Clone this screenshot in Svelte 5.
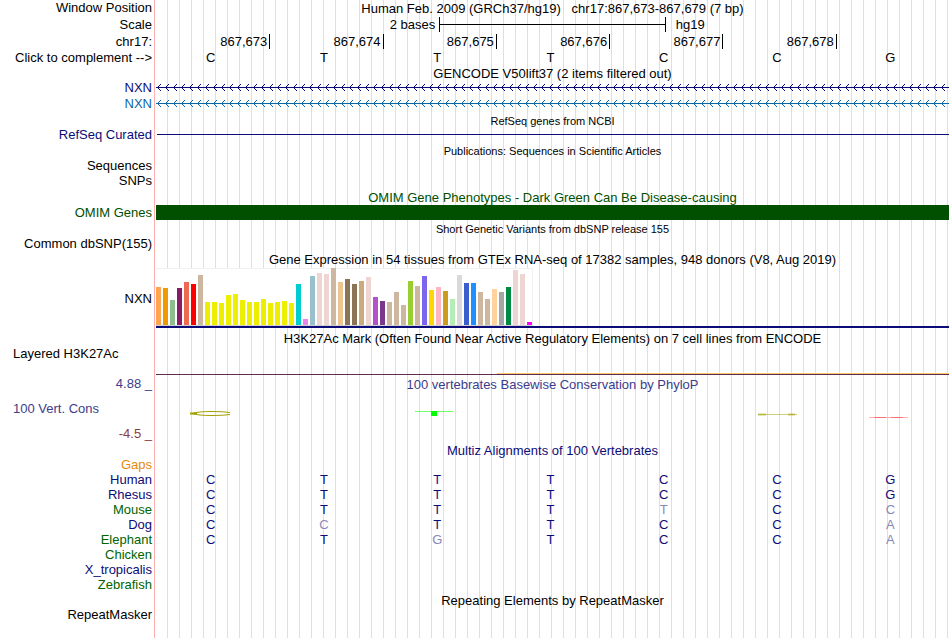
<script lang="ts">
  const positions = ['867,673', '867,674', '867,675', '867,676', '867,677', '867,678'];

  const complements: Record<string, string> = { A: 'T', C: 'G', G: 'C', T: 'A' };
  let complemented = $state(false);
  const reference = 'CTTTCCG'.split('');
  let bases = $derived(complemented ? reference.map((b) => complements[b]) : reference);

  const genes = [
    { id: 'arrows-a', color: '#0c0c78' },
    { id: 'arrows-b', color: '#0c66a8' },
  ];

  const alignments = [
    { species: 'Gaps', tone: 'orange', seq: '' },
    { species: 'Human', tone: 'navy', seq: 'CTTTCCG' },
    { species: 'Rhesus', tone: 'navy', seq: 'CTTTCCG' },
    { species: 'Mouse', tone: 'green', seq: 'CTTTTCC' },
    { species: 'Dog', tone: 'navy', seq: 'CCTTCCA' },
    { species: 'Elephant', tone: 'green', seq: 'CTGTCCA' },
    { species: 'Chicken', tone: 'green', seq: '' },
    { species: 'X_tropicalis', tone: 'navy', seq: '' },
    { species: 'Zebrafish', tone: 'green', seq: '' },
  ];

  // GTEx tissues: [bar height, tissue colour]
  const brain = '#eeee00';
  const tissues: [number, string][] = [
    [38, '#ffa54f'], [37, '#ee9a00'], [25, '#8fbc8f'], [37, '#8b1c62'], [43, '#ee6a50'],
    [41, '#ff0000'], [50, '#cdb79e'],
    [23, brain], [23, brain], [22, brain], [30, brain], [31, brain], [25, brain], [23, brain],
    [23, brain], [26, brain], [22, brain], [23, brain], [24, brain], [22, brain],
    [41, '#00cdcd'], [6, '#ee82ee'], [49, '#9ac0cd'], [52, '#eed5d2'], [51, '#eed5d2'],
    [57, '#cdb79e'], [43, '#eec591'], [46, '#8b7355'], [41, '#8b7355'], [44, '#cdaa7d'],
    [48, '#eed5d2'], [28, '#b452cd'], [24, '#7a378b'], [23, '#cdb79e'], [33, '#cdb79e'],
    [20, '#cdb79e'], [44, '#9acd32'], [39, '#cdb79e'], [49, '#7a67ee'], [35, '#ffd700'],
    [38, '#ffb6c1'], [34, '#cd9b1d'], [26, '#b4eeb4'], [50, '#d9d9d9'], [42, '#3a5fcd'],
    [42, '#1e90ff'], [33, '#cdb79e'], [26, '#cdb79e'], [36, '#ffd39b'], [33, '#a6a6a6'],
    [38, '#008b45'], [55, '#eed5d2'], [51, '#eed5d2'], [3, '#ff00ff'],
  ];
</script>

<main class="browser">
  <div class="row tall">
    <span class="label">Window Position</span>
    <span class="title">Human Feb. 2009 (GRCh37/hg19) &nbsp; chr17:867,673-867,679 (7 bp)</span>
  </div>
  <div class="row tall">
    <span class="label">Scale</span>
    <div class="scale">
      <span class="scale-size">2 bases</span>
      <span class="scale-bar"></span>
      <span class="scale-db">hg19</span>
    </div>
  </div>
  <div class="row medium">
    <span class="label">chr17:</span>
    <div class="ruler">
      {#each positions as position}
        <span>{position}</span>
      {/each}
    </div>
  </div>
  <div class="row">
    <button class="label" onclick={() => (complemented = !complemented)}>Click to complement --&gt;</button>
    <div class="bases">
      {#each bases as base}
        <span>{base}</span>
      {/each}
    </div>
  </div>

  <div class="row"><h2 class="title">GENCODE V50lift37 (2 items filtered out)</h2></div>
  {#each genes as gene}
    <div class="row medium" style:color={gene.color}>
      <span class="label">NXN</span>
      <svg class="gene" height="15" aria-hidden="true">
        <defs>
          <pattern id={gene.id} width="8" height="15" patternUnits="userSpaceOnUse">
            <path d="M1 7h1v1h-1zM2 6h1v1h-1zM3 5h1v1h-1zM4 4h1v1h-1zM2 8h1v1h-1zM3 9h1v1h-1zM4 10h1v1h-1z" fill="currentColor" />
          </pattern>
        </defs>
        <rect y="7" width="100%" height="1" fill="currentColor" />
        <rect width="100%" height="15" fill="url(#{gene.id})" />
      </svg>
    </div>
  {/each}

  <div class="row"><h2 class="title small">RefSeq genes from NCBI</h2></div>
  <div class="row navy">
    <span class="label">RefSeq Curated</span>
    <div class="line"></div>
  </div>

  <div class="row medium"><h2 class="title small">Publications: Sequences in Scientific Articles</h2></div>
  <div class="row"><span class="label">Sequences</span></div>
  <div class="row medium"><span class="label">SNPs</span></div>

  <div class="row medium forest"><h2 class="title">OMIM Gene Phenotypes - Dark Green Can Be Disease-causing</h2></div>
  <div class="row forest">
    <span class="label">OMIM Genes</span>
    <div class="omim"></div>
  </div>

  <div class="row medium"><h2 class="title small">Short Genetic Variants from dbSNP release 155</h2></div>
  <div class="row"><span class="label">Common dbSNP(155)</span></div>

  <div class="row medium"><h2 class="title">Gene Expression in 54 tissues from GTEx RNA-seq of 17382 samples, 948 donors (V8, Aug 2019)</h2></div>
  <div class="row expression">
    <span class="label">NXN</span>
    <div class="gtex">
      <div class="bars">
        {#each tissues as [height, color]}
          <span style:height="{height}px" style:background={color}></span>
        {/each}
      </div>
    </div>
  </div>

  <div class="row medium"><h2 class="title">H3K27Ac Mark (Often Found Near Active Regulatory Elements) on 7 cell lines from ENCODE</h2></div>
  <div class="row histone">
    <span class="label left">Layered H3K27Ac</span>
    <div class="signal"><span></span></div>
  </div>

  <div class="row medium slate">
    <span class="label">4.88 _</span>
    <h2 class="title">100 vertebrates Basewise Conservation by PhyloP</h2>
  </div>
  <div class="row conservation slate">
    <span class="label left">100 Vert. Cons</span>
    <svg viewBox="0 0 793 33" height="33" preserveAspectRatio="none" aria-hidden="true">
      <g fill="none" stroke="#a0a000">
        <path d="M74 20.5Q68 19.5 56 19.5Q42 19.5 36 21.5Q42 23.5 56 23.5Q68 23.5 74 22.5" />
        <path d="M34 21.5h7" stroke-width="2" />
        <path d="M602 22.5h39" opacity=".5" />
        <path d="M602 22.5h8M632 22.5h7" stroke-width="2" opacity=".5" />
      </g>
      <path d="M259 19h38v1h-38z" fill="#70ff70" />
      <path d="M275 19h6v5h-6z" fill="#00ff00" />
      <path d="M713 25h39v1h-39z" fill="#ffb0b0" />
      <path d="M718 25h12v1h-12zM735 25h12v1h-12z" fill="#ff7070" />
    </svg>
  </div>
  <div class="row floor maroon"><span class="label">-4.5 _</span></div>

  <div class="row navy"><h2 class="title">Multiz Alignments of 100 Vertebrates</h2></div>
  <table>
    <tbody>
      {#each alignments as { species, tone, seq }}
        <tr>
          <th class={tone} scope="row">{species}</th>
          {#each reference as base, i}
            <td class:mismatch={seq && seq[i] !== base}>{seq[i] ?? ''}</td>
          {/each}
        </tr>
      {/each}
    </tbody>
  </table>

  <div class="row"><h2 class="title">Repeating Elements by RepeatMasker</h2></div>
  <div class="row"><span class="label">RepeatMasker</span></div>
</main>

<style>
  :global(body) { margin: 0; background: #fff; }

  .browser {
    --gutter: 156px;
    box-sizing: border-box;
    min-height: 100vh;
    padding-right: 1px;
    font: 13px/15px "Liberation Sans", Arial, Helvetica, sans-serif;
    color: #000;
    background:
      linear-gradient(#ffb0b0, #ffb0b0) 154px 0 / 1px 100% no-repeat,
      repeating-linear-gradient(to right, transparent 0 11px, #dcdcf8 11px 12px) var(--gutter) 0 / 100% 100% no-repeat;
  }

  .row {
    display: grid;
    grid-template-columns: var(--gutter) minmax(0, 1fr);
    min-height: 15px;
  }
  .row.medium { min-height: 16px; }
  .row.tall { min-height: 17px; }

  .label {
    padding: 0 4px 0 0;
    text-align: right;
    white-space: nowrap;
  }
  .label.left { padding-left: 13px; text-align: left; }
  button.label { border: none; background: none; font: inherit; color: inherit; cursor: pointer; }

  .title {
    grid-column: 2;
    height: 15px;
    margin: 0;
    font-size: 13px;
    font-weight: normal;
    line-height: 17px;
    text-align: center;
    white-space: nowrap;
  }
  .title.small { font-size: 11px; line-height: 19px; }

  .navy { color: #0c0c78; }
  .green { color: #006400; }
  .forest { color: #005000; }
  .orange { color: #e68a0c; }
  .slate { color: #3c3c8c; }
  .maroon { color: #8c3c3c; }

  .scale { display: grid; grid-template-columns: 5fr 4fr 5fr; }
  .scale-size { padding-right: 4px; text-align: right; }
  .scale-db { padding-left: 10px; }
  .scale-bar {
    height: 15px;
    border: solid #000;
    border-width: 0 1px;
    background: linear-gradient(#000, #000) 0 7px / 100% 1px no-repeat;
  }

  .ruler, .bases { display: grid; grid-template-columns: repeat(7, 1fr); }
  .ruler span {
    height: 15px;
    margin-right: -1px;
    padding-right: 2px;
    border-right: 1px solid #000;
    text-align: right;
  }
  .bases span { padding-right: 4px; text-align: center; }

  .gene { display: block; width: 100%; shape-rendering: crispEdges; }
  .line { height: 1px; margin: 7px 0 0 1px; background: currentColor; }
  .omim { background: #005000; }

  .expression { min-height: 63px; align-items: center; }
  .gtex { align-self: start; padding-top: 1px; border-bottom: 2px solid #0c0c78; }
  .bars {
    display: flex;
    align-items: flex-end;
    gap: 2px;
    width: max-content;
    height: 56px;
    border: solid #f0f0f0;
    border-width: 1px 1px 1px 0;
    border-bottom-color: #d0d0d0;
    background: #fff;
  }
  .bars span { width: 5px; }

  .histone { min-height: 30px; }
  .signal { height: 28px; border-bottom: 1px solid #5c2c50; }
  .signal span {
    display: block;
    height: 27px;
    margin-left: 43%;
    border-bottom: 1px solid #ffc860;
  }

  .conservation { min-height: 33px; align-items: center; }
  .conservation svg { display: block; width: 100%; }
  .floor { min-height: 17px; align-items: center; }

  table { width: 100%; border-collapse: collapse; table-layout: fixed; color: #0c0c78; }
  th { width: 152px; padding: 0 4px 0 0; font-weight: normal; text-align: right; }
  td { height: 15px; padding: 0 4px 0 0; text-align: center; }
  .mismatch { color: #8888b8; }
</style>
